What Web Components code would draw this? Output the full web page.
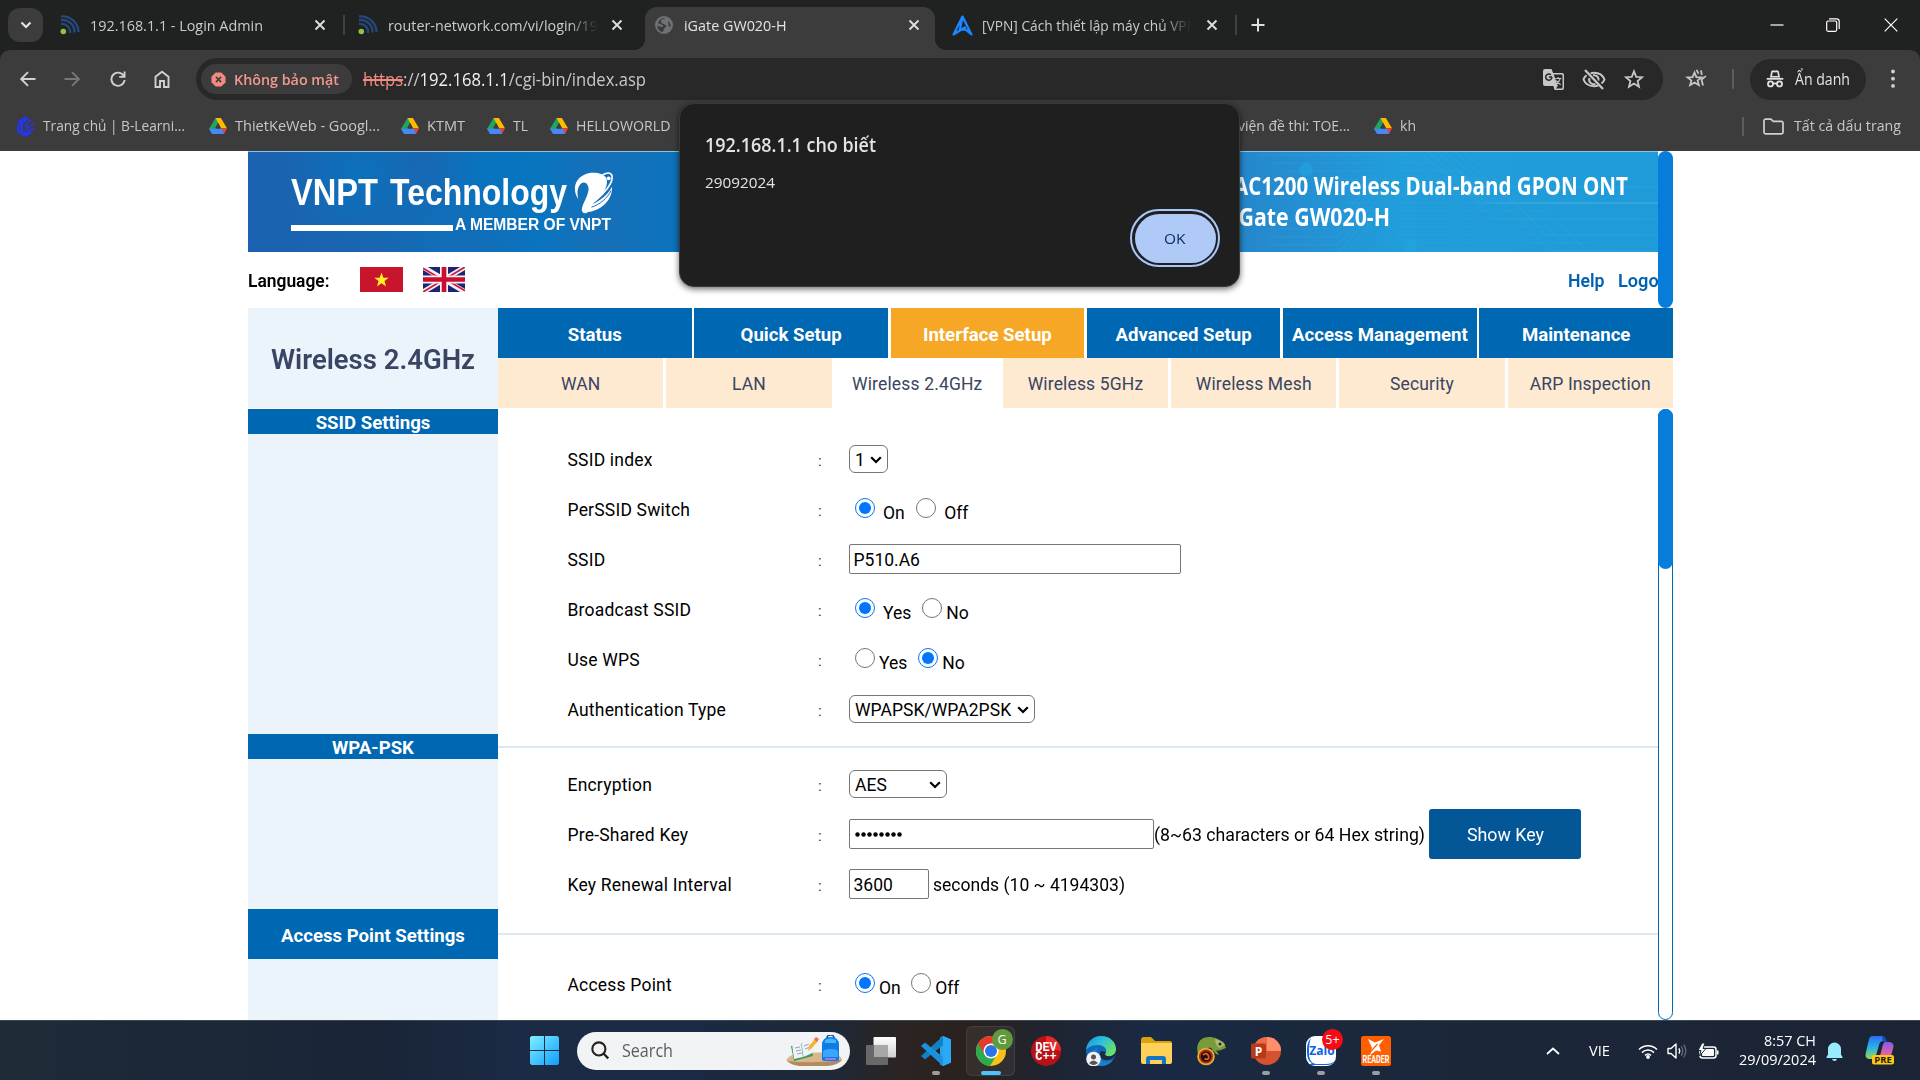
<!DOCTYPE html>
<html lang="vi">
<head>
<meta charset="utf-8">
<title>iGate GW020-H</title>
<style>
html,body{margin:0;padding:0}
body{width:1920px;height:1080px;overflow:hidden;background:#fff;font-family:"Open Sans","Noto Sans",sans-serif}
</style>
</head>
<body>
<desk-top></desk-top>
<script>
const fits = [];
const def = (name, css, html, after) => customElements.define(name, class extends HTMLElement {
  connectedCallback() {
    if (this.shadowRoot) return;
    const r = this.attachShadow({mode: 'open'});
    r.innerHTML = `<style>*{box-sizing:border-box}${css}</style>` + (typeof html === 'function' ? html(this) : html);
    if (after) after(this, r);
  }
});

/* ---------- icons ---------- */
const drive = '<path d="M6.5 1h5.2L5.2 19 0 13z" fill="#1fa463"/><path d="M6.5 1h5.4l6.1 11.5h-6z" fill="#ffba00"/><path d="M18 12.5 15 19l-4-6.5z" fill="#ea4335"/><path d="M0 13h13l2 6H3z" fill="#4688f4"/><path d="m6 12.5 3-6 3 6z" fill="#3c3c3c"/>';
const wifiFav = '<g fill="none" stroke="#26477f" stroke-width="2.3"><path d="M1 9a8 8 0 0 1 9 9"/><path d="M1 5a12 12 0 0 1 13.5 12.500"/><path d="M1 1.500A16 16 0 0 1 18.500 17"/></g><circle cx="3.300" cy="16.500" r="2.800" fill="#8bc83f"/>';
const X = '<path d="m1.500 1.500 9 9m0-9-9 9" stroke="#dedede" stroke-width="1.900" fill="none"/>';
const I = {
  chev: ['0 0 12 8', '<path d="m1.500 1.500 4.500 4.500L10.500 1.500" stroke="#e3e3e3" stroke-width="2.200" fill="none"/>'],
  wifiFav: ['0 0 20 20', wifiFav],
  x: ['0 0 12 12', X],
  globe: ['0 0 18 18', '<circle cx="9" cy="9" r="9" fill="#6e7277"/><path d="M11 2c-2 1-5 1-5 3.500S10 8 11 9.500c.6 1.500-.5 2-1.500 2.500-1.500 1 0 3-2 4C4 15.500 2 12 2.500 9.500L6 11c1 0 2.500 0 2-1.500C7 8 4 8.500 3 7c1-3 3.500-5 8-5zm2 3c2 1 3 4 2.500 6-1 0-2.500-1-2-3z" fill="#3c3c3c"/>'],
  alogo: ['0 0 20 20', '<path d="M10 1.500 18.500 18.500 12.800 13.600 7.500 14zM10 1.500 1.500 18.500 13 11.500" fill="none" stroke="#1a86ff" stroke-width="2.200" stroke-linejoin="round"/>'],
  plus: ['0 0 14 14', '<path d="M7 .5v13M.5 7h13" stroke="#dedede" stroke-width="2"/>'],
  min: ['0 0 14 14', '<path d="M.5 7h13" stroke="#fff" stroke-width="1.200"/>'],
  rest: ['0 0 14 14', '<rect x=".7" y="3" width="10" height="10.300" rx="1.500" fill="none" stroke="#fff" stroke-width="1.200"/><path d="M3 .8h7.500A2.700 2.700 0 0 1 13.200 3.500V11" fill="none" stroke="#fff" stroke-width="1.200"/>'],
  wx: ['0 0 14 14', '<path d="m.7.700 12.600 12.600m0-12.600L.7 13.300" stroke="#fff" stroke-width="1.200"/>'],
  back: ['0 0 16 16', '<path d="M15.500 8H1.800M8 1.200 1.200 8 8 14.800" fill="none" stroke="#d0d0d0" stroke-width="1.900"/>'],
  fwd: ['0 0 16 16', '<path d="M.5 8h13.700M8 1.200 14.800 8 8 14.800" fill="none" stroke="#777" stroke-width="1.900"/>'],
  reload: ['0 0 16 16', '<path d="M13.800 5A6.600 6.600 0 1 0 14.600 9" fill="none" stroke="#d0d0d0" stroke-width="1.900"/><path d="M15.500.5v6.300H9.200V4.900h4.400V.5z" fill="#d0d0d0"/>'],
  home: ['0 0 16 18', '<path d="M1.500 17V6.800L8 1.800l6.500 5V17H10v-6H6v6z" fill="none" stroke="#d0d0d0" stroke-width="1.900"/>'],
  bad: ['0 0 16 16', '<path d="M5 .5h6L15.500 5v6L11 15.500H5L.5 11V5z" fill="#f28b82"/><path d="m5.200 5.200 5.600 5.600m0-5.600-5.600 5.600" stroke="#3c3c3c" stroke-width="1.600"/>'],
  trans: ['0 0 21 21', '<path d="M2 0h6.500l1.600 4H19a2 2 0 0 1 2 2v13a2 2 0 0 1-2 2h-7.500l-1-4H2a2 2 0 0 1-2-2V2A2 2 0 0 1 2 0z" fill="#c7c7c7"/><path d="M10.700 5.500H18.500a1 1 0 0 1 1 1v12a1 1 0 0 1-1 1h-5.700l2-2.500z" fill="#282828"/><path d="M9 8H5.800M8.900 8a3.100 3.100 0 1 1-1-2.200" fill="none" stroke="#282828" stroke-width="1.500"/><path d="M12.300 9.500h6M15.200 8v1.500m2 0c-.5 2.500-2 4-3.800 5m-.1-3c1 2 2.500 3.200 4.400 4.300" fill="none" stroke="#c7c7c7" stroke-width="1.200"/>'],
  eye: ['0 0 24 22', '<path d="M4.500 6.500C3 7.800 2 9.300 1.500 11c1.600 4.200 5.700 7 10.500 7 1.600 0 3-.3 4.500-.9M8.500 4.500c1-.3 2.300-.5 3.500-.5 4.800 0 8.900 2.800 10.500 7-.6 1.600-1.600 3-3 4.200" fill="none" stroke="#c7c7c7" stroke-width="2"/><path d="M7.500 9.500a4.600 4.600 0 0 0 6 6M11 6.600a4.600 4.600 0 0 1 5.500 5.500" fill="none" stroke="#c7c7c7" stroke-width="2"/><path d="m3 1 18 20" stroke="#c7c7c7" stroke-width="2.200"/>'],
  star: ['0 0 20 20', '<path d="m10 2.300 2.200 5.500 5.900.4-4.500 3.800 1.400 5.700-5-3.100-5 3.100 1.400-5.700L1.900 8.200l5.900-.4z" fill="none" stroke="#c7c7c7" stroke-width="1.800"/>'],
  star2: ['0 0 22 22', '<path d="m9.500 4 1.900 4.900 5.200.3-4 3.400 1.300 5.100-4.400-2.800-4.400 2.800 1.300-5.100-4-3.400 5.200-.3z" fill="none" stroke="#c7c7c7" stroke-width="1.800"/><path d="m11.500.8 2 4.300M16 1.500l.8 5M21 7.700l-4.500 4 1.500 6.500" fill="none" stroke="#c7c7c7" stroke-width="1.800"/>'],
  incog: ['0 0 20 20', '<path d="M5.500 7.500 6.700 1.800 8 1.200l2 .6 2-.6 1.300.6 1.200 5.700z" fill="none" stroke="#e3e3e3" stroke-width="1.900"/><path d="M.8 9.800h18.400" stroke="#e3e3e3" stroke-width="2"/><circle cx="5" cy="15.500" r="2.800" fill="none" stroke="#e3e3e3" stroke-width="2"/><circle cx="15" cy="15.500" r="2.800" fill="none" stroke="#e3e3e3" stroke-width="2"/><path d="M7.800 15h4.400" stroke="#e3e3e3" stroke-width="2"/>'],
  kebab: ['0 0 4 20', '<g fill="#d0d0d0"><circle cx="2" cy="2.500" r="1.900"/><circle cx="2" cy="9.700" r="1.900"/><circle cx="2" cy="16.900" r="1.900"/></g>'],
  blearn: ['0 0 19 22', '<path d="M9.500 0 13 2.500 7 8v6l3 3 5-2v4l-6 3-8-5V6z" fill="#2436e8"/><path d="m8.500 11 6.500-7m-6 9 9.500-5m-8.500 7 8-1.500" stroke="#2436e8" stroke-width="1.800" fill="none"/><path d="M2 6c.5 5 2 9 6 12" stroke="#3c3c3c" stroke-width="1" fill="none"/>'],
  drive: ['0 0 18 20', drive],
  folder: ['0 0 21 16', '<path d="M1 13.500V2.500A1.500 1.500 0 0 1 2.500 1H8l2.200 2.200h8.300A1.500 1.500 0 0 1 20 4.700v8.800A1.500 1.500 0 0 1 18.500 15h-16A1.500 1.500 0 0 1 1 13.500z" fill="none" stroke="#d0d0d0" stroke-width="1.700"/>'],
  vn: ['0 0 43 25', '<rect width="43" height="25" fill="#c8152b"/><path d="m21.500 5.500 1.900 5.200 5.300.1-4.200 3.300 1.500 5.300-4.500-3.100-4.500 3.100 1.500-5.300-4.200-3.300 5.300-.1z" fill="#ffee22"/>'],
  uk: ['0 0 42 25', '<rect width="42" height="25" fill="#1d2573"/><path d="m0 0 42 25M42 0 0 25" stroke="#f4eef6" stroke-width="5"/><path d="m0 1.300 19 11.200M42 23.700 23 12.500M42 0 23 11.500M0 25l19-11.500" stroke="#cf1b3a" stroke-width="1.700"/><path d="M21 0v25M0 12.500h42" stroke="#f8eef4" stroke-width="8"/><path d="M21 0v25M0 12.500h42" stroke="#c8102e" stroke-width="4.600"/>'],
  swoosh: ['0 0 42 44', '<path d="M5.500 28C-.5 19 1 8 11 3 19-1 31 1 34 6c3 6-2 17-12 25-4 4-3 8-8 11-3 1-5-1-5-4 1-6 6-12 7-20C16 12 12 9 8 12c-4 4-4 10-2.500 16z" fill="#fff"/><path d="M29 4c5-4 10-4 11 0 1.500 7-8 18-18 26" fill="none" stroke="#fff" stroke-width="1.700"/><path d="M20 33c8-4 16-10 20-18 .5 12-9 24-25 26z" fill="#fff"/><path d="M19 36c9-3 16-9 20-17" fill="none" stroke="#1a6ab5" stroke-width="1"/><circle cx="36.500" cy="6.500" r="2" fill="#fff"/>'],
  win: ['0 0 29 29', '<defs><linearGradient id="a" x1="0" y1="0" x2="1" y2="1"><stop stop-color="#7df1ff"/><stop offset="1" stop-color="#109cff"/></linearGradient></defs><path d="M1.500 0H14v14H0V1.500zM15 0h12.500L29 1.500V14H15zM0 15h14v14H1.500L0 27.500zM15 15h14v12.500L27.500 29H15z" fill="url(#a)"/>'],
  lens: ['0 0 19 20', '<circle cx="8.300" cy="8.300" r="6.900" fill="none" stroke="#222" stroke-width="2.200"/><path d="m13.200 13.200 5 5.200" stroke="#222" stroke-width="2.500"/>'],
  school: ['0 0 56 31', '<path d="M0 25q5-7 17-7l31-1q8 5 8 8-3 4-14 5H13Q4 29 0 25z" fill="#d9b78d"/><path d="M1 26q26 3 55-1-4 5-14 6H13Q5 30 1 26z" fill="#b48b60"/><path d="m5 11 19-5 3 15-19 5z" fill="#3a9c56"/><path d="m6 9 9-1 2 14-9 2zM15.500 8l9-4 2 14-9 4z" fill="#f1f2fa"/><path d="m9 13 5-1m-4 4 5-1m-4 4 5-1m2-7 5-2m-4 5 5-2" stroke="#9aa2ba" stroke-width="1"/><path d="m22 16 1-5 6-7 3 2-6 7z" fill="#f6b32c"/><path d="m28 4 2-2 3 2-2 3z" fill="#ef6b55"/><path d="M36 10Q36 2 44.500 2T53 10v14q0 2-3 2H39q-3 0-3-2z" fill="#1479e8"/><path d="M41 3q0-3 3.500-3T48 3" fill="none" stroke="#0a50b0" stroke-width="1.500"/><path d="M37 17q0-3 7.500-3t7.500 3v5H37z" fill="#38a7fa"/><path d="M39 5q5-3 11 0v3H39z" fill="#42b8fd"/><path d="M39 24h11" stroke="#c77df1" stroke-width="1.500"/>'],
  task: ['0 0 30 28', '<defs><linearGradient id="a" x2="0" y2="1"><stop stop-color="#fff"/><stop offset="1" stop-color="#cfcfcf"/></linearGradient></defs><rect x="7.500" width="22.500" height="20.500" rx="1" fill="url(#a)"/><rect y="8" width="22" height="20" rx="1" fill="#686868"/><path d="M8 8h14v12H8z" fill="#a7a7a7"/>'],
  code: ['0 0 30 30', '<path d="m22 0 8 3.500v23L22 30l-3-1.500V1.500z" fill="#26a3f0"/><path d="M22 0v9L4 23.500 0 20z" fill="#1180c4"/><path d="M22 30v-9L4 6.500 0 10z" fill="#1b91dc"/><path d="M22 0v30l8-3.500v-23z" fill="#2aa9f5"/>'],
  chrome: ['0 0 30 30', '<circle cx="15" cy="15" r="15" fill="#fbc116"/><path d="M15 15 2 7.500A15 15 0 0 0 14 30l7-11.500z" fill="#2da94f"/><path d="M15 7.500h13A15 15 0 0 0 2 7.500l6.500 11z" fill="#e33b2e"/><circle cx="15" cy="15" r="7.500" fill="#fff"/><circle cx="15" cy="15" r="6" fill="#2a74e8"/>'],
  dev: ['0 0 30 30', '<circle cx="15" cy="15" r="15" fill="#b90f17"/><path d="M15 0a15 15 0 0 1 15 15L15 12z" fill="#e32b2b"/><g fill="#fff" font-family="Liberation Mono" font-weight="700" text-anchor="middle"><text x="15" y="14.500" font-size="12">DEV</text><text x="15" y="24" font-size="12">C++</text></g>'],
  edge: ['0 0 30 30', '<defs><linearGradient id="a" x2="1" y2=".6"><stop stop-color="#1b90dc"/><stop offset=".5" stop-color="#2bc0da"/><stop offset="1" stop-color="#6be06a"/></linearGradient></defs><circle cx="15" cy="15" r="15" fill="#1167b8"/><path d="M0 14C1 5 8 0 15 0c9 0 15 6 15 13 0 6-5 8-9 7-3-1-2-2-1-4 1-4-3-7-8-7C6 9 1 12 0 14z" fill="url(#a)"/><path d="M12 12c-5 8 2 17 15 12-3 4-7 6-12 6C6 30 2 22 6 15c2-2 4-3 6-3z" fill="#1a7fcd"/><path d="M20 16c-1 2-2 3 1 4 4 1 8-1 9-5 1 5-4 9-9 9-7 0-8-6-6-9z" fill="#1b2a3e"/><circle cx="7.500" cy="23" r="7.300" fill="#f3f3f3"/><circle cx="7.500" cy="21" r="2.500" fill="#555"/><path d="M3 27q4.500-5 9 0-4.500 4-9 0z" fill="#555"/>'],
  fold: ['0 0 31 27', '<path d="M0 3q0-3 3-3h7l4 4h15q2 0 2 2v8H0z" fill="#dba10f"/><path d="M0 6h31v19q0 2-2 2H2q-2 0-2-2z" fill="#ffd158"/><path d="M5 22q0-3 3-3h14q3 0 3 3v5h-4v-4H9v4H5z" fill="#1275c6"/>'],
  gecko: ['0 0 30 30', '<path d="M3 20C-2 9 4 1 13 1c6 0 9 2 15 6l2 5-5 2q-3 1-5 0l3 5-3-1-5-6c-6-1-9 3-8 9z" fill="#7a9a3c"/><path d="M19 3q7 1 10 6l-6 3q-4-4-4-9z" fill="#a9bd70"/><circle cx="10" cy="20.500" r="8.800" fill="#dfb42c"/><circle cx="10" cy="20.500" r="7" fill="#c02512"/><circle cx="10" cy="20.500" r="5.200" fill="#171311"/><path d="M7 19q4-3 5.500 1t-4 3" fill="none" stroke="#eb5c1a" stroke-width="1.800"/><circle cx="24" cy="8" r="1.500" fill="#222"/>'],
  ppt: ['0 0 30 28', '<circle cx="16" cy="14" r="14" fill="#d35230"/><path d="M16 0a14 14 0 0 1 14 14H16z" fill="#ff8f6b"/><path d="M16 0v14H2A14 14 0 0 1 16 0z" fill="#ed6c47"/><rect x="0" y="6.500" width="15" height="15" rx="1.500" fill="#b93a1a"/><text x="7.500" y="18.500" font-size="12" font-weight="700" font-family="Open Sans" text-anchor="middle" fill="#fff">P</text>'],
  zalo: ['0 0 30 30', '<rect width="30" height="30" rx="9" fill="#fff"/><path d="M5 2C2 5 1 9 1 15s1 10 5 12l-3 2h18q9 0 9-9v1q0 7-10 7H10Q2 27 3 15 3 6 5 2z" fill="#0b68e8"/><text x="16" y="19" font-size="12" font-weight="700" font-family="Open Sans" text-anchor="middle" fill="#0b62e4">Zalo</text>'],
  foxit: ['0 0 30 30', '<rect width="30" height="30" rx="2.500" fill="#ff5f00"/><path d="M7 3 14 6.500 23 3l-5 6 2 6.500-5-1-6 4.500 2-7z" fill="#fff"/><path d="m8.500 17 8-9" stroke="#ff5f00" stroke-width="1.200"/><text x="15" y="27" font-size="10" font-weight="700" font-family="Roboto" text-anchor="middle" textLength="27" lengthAdjust="spacingAndGlyphs" fill="#fff">READER</text>'],
  up: ['0 0 14 8', '<path d="m1 7 6-5.500L13 7" fill="none" stroke="#fff" stroke-width="1.700"/>'],
  wifi: ['0 0 20 16', '<g fill="none" stroke="#fff" stroke-width="1.500"><path d="M1 6.500a12.500 12.500 0 0 1 18 0"/><path d="M4 9.600a8.500 8.500 0 0 1 12 0"/><path d="M7 12.400a4.500 4.500 0 0 1 6 0"/></g><circle cx="10" cy="14" r="1.900" fill="#fff"/>'],
  snd: ['0 0 20 16', '<path d="M1 5.500h3l5-4.500v14l-5-4.500H1z" fill="none" stroke="#fff" stroke-width="1.400" stroke-linejoin="round"/><path d="M12 5.300q1.500 2.700 0 5.400" fill="none" stroke="#fff" stroke-width="1.400"/><path d="M14.200 3.300q3 4.700 0 9.400M16.800 1.600q4 6.400 0 12.800" fill="none" stroke="#66707c" stroke-width="1.200"/>'],
  bat: ['0 0 21 16', '<rect x="2" y="4" width="16" height="11" rx="2.500" fill="none" stroke="#fff" stroke-width="1.500"/><rect x="4" y="6" width="12" height="7" rx="1" fill="#fff"/><path d="M19 7.500h1.500v4H19z" fill="#fff"/><path d="M4 0 0 7.500h3L1.500 13 8 5.500H5L7 0z" fill="#fff" stroke="#1c2636" stroke-width="1"/>'],
  bell: ['0 0 17 20', '<path d="M2 13.500V8a6.500 6.500 0 0 1 13 0v5.500l1.500 2.500v1H.5v-1zM6 18h5q-.5 2-2.500 2T6 18z" fill="#99ebff"/>'],
  copilot: ['0 0 30 29', '<defs><linearGradient id="a" x2="0" y2="1"><stop stop-color="#2b6df3"/><stop offset=".5" stop-color="#27b4e8"/><stop offset="1" stop-color="#9ed64a"/></linearGradient><linearGradient id="b" x2="0" y2="1"><stop stop-color="#8958e8"/><stop offset=".6" stop-color="#e865a0"/><stop offset="1" stop-color="#f59b51"/></linearGradient></defs><path d="M7 0h10q3 0 4 4l-3 1q-3 0-4 4l-4 14H5q-6 0-4-7L4 3q1-3 3-3z" fill="url(#a)"/><path d="M20 6h4q6 0 4 7l-3 10q-1 5-6 5H9q4 0 5-4l3-12q1-5 3-6z" fill="url(#b)"/><path d="M17 0q4 0 5 6h-4z" fill="#1747b8"/><rect x="7" y="19" width="22" height="9.500" rx="2" fill="#ffc70f"/><text x="18" y="27" font-size="9.500" font-weight="700" font-family="Open Sans" text-anchor="middle" fill="#202020">PRE</text>']
};
def('ui-icon', ':host{display:block;flex:none}svg{display:block;width:100%;height:100%}',
  e => { const i = I[e.getAttribute('n')]; return `<svg viewBox="${i[0]}" preserveAspectRatio="none">${i[1]}</svg>`; },
  e => { e.style.width = e.getAttribute('w') + 'px'; e.style.height = e.getAttribute('h') + 'px'; if (e.hasAttribute('l')) e.style.marginLeft = e.getAttribute('l') + 'px'; });

/* text squeezed or stretched to a given width */
def('fit-text', ':host{display:block;flex:none;white-space:nowrap}span{display:inline-block;transform-origin:0 50%}', '<span><slot></slot></span>',
  (e, r) => { e.style.width = e.getAttribute('w') + 'px'; if (e.hasAttribute('l')) e.style.marginLeft = e.getAttribute('l') + 'px'; fits.push([e, r.querySelector('span')]); });

/* ---------- browser ---------- */
def('tab-strip', `:host{display:flex;height:50px;background:#202221;align-items:center;font-size:15px;color:#c9cccb;position:relative}
.s{width:35px;height:34px;border-radius:12px;background:#3c3c3c;margin-left:8px;display:flex;align-items:center;justify-content:center}
.sep{width:2px;height:20px;background:#3f4241}
.act{width:290px;height:43px;margin:7px 0 0;background:#3c3c3c;border-radius:12px 12px 0 0;display:flex;align-items:center;position:relative;padding-bottom:7px;color:#e3e3e3}
.act:before,.act:after{content:"";position:absolute;bottom:0;width:12px;height:12px}
.act:before{left:-12px;background:radial-gradient(circle at 0 0,transparent 12px,#3c3c3c 12.500px)}
.act:after{right:-12px;background:radial-gradient(circle at 100% 0,transparent 12px,#3c3c3c 12.500px)}
.f{overflow:hidden;-webkit-mask-image:linear-gradient(90deg,#000 86%,transparent)}`,
`<div class="s"><ui-icon n="chev" w="12" h="8"></ui-icon></div>
<ui-icon n="wifiFav" w="20" h="20" l="16.500"></ui-icon><fit-text w="173" l="10.500">192.168.1.1 - Login Admin</fit-text><ui-icon n="x" w="12" h="12" l="51"></ui-icon>
<div class="sep" style="margin-left:17px"></div>
<ui-icon n="wifiFav" w="20" h="20" l="13"></ui-icon><div class="f" style="width:210px;margin-left:9.500px"><fit-text w="210">router-network.com/vi/login/19</fit-text></div><ui-icon n="x" w="12" h="12" l="13.500"></ui-icon>
<div class="act" style="margin-left:21.500px"><ui-icon n="globe" w="18" h="18" l="10.500"></ui-icon><fit-text w="102.500" l="10.500">iGate GW020-H</fit-text><ui-icon n="x" w="12" h="12" l="122"></ui-icon></div>
<ui-icon n="alogo" w="21" h="21" l="17.500"></ui-icon><div class="f" style="width:209px;margin-left:9px"><fit-text w="215">[VPN] Cách thiết lập máy chủ VPN</fit-text></div><ui-icon n="x" w="12" h="12" l="14.500"></ui-icon>
<div class="sep" style="margin-left:17px"></div><ui-icon n="plus" w="14" h="14" l="14"></ui-icon>
<ui-icon n="min" w="14" h="14" l="505"></ui-icon><ui-icon n="rest" w="14" h="14" l="42"></ui-icon><ui-icon n="wx" w="14" h="14" l="44"></ui-icon>`);

def('tool-bar', `:host{display:block;background:#202221}
.b{display:flex;height:58px;background:#3c3c3c;border-radius:10px 10px 0 0;align-items:center}
.o{margin-left:26px;width:1467px;height:42px;border-radius:21px;background:#282828;display:flex;align-items:center}
.chip{margin-left:5px;width:151px;height:30px;border-radius:15px;background:#3c3c3c;display:flex;align-items:center;color:#f2998f;font-size:15px;font-weight:600}
.u{font-size:17.500px;color:#c7c7c7}.u s{color:#f28b82;text-decoration-thickness:2px}.u b{font-weight:400;color:#f0f0f0}
.sep{width:2px;height:20px;background:#5e5e5e;border-radius:1px}
.p{margin-left:16px;width:116px;height:41px;border-radius:21px;background:#282828;display:flex;align-items:center;color:#e3e3e3;font-size:15.500px;padding-bottom:1px}`,
`<div class="b"><ui-icon n="back" w="16" h="16" l="20"></ui-icon><ui-icon n="fwd" w="16" h="16" l="28"></ui-icon><ui-icon n="reload" w="16" h="16" l="29.500"></ui-icon><ui-icon n="home" w="16" h="18" l="28.500"></ui-icon>
<div class="o"><div class="chip"><ui-icon n="bad" w="15" h="15" l="10"></ui-icon><fit-text w="105" l="8">Không bảo mật</fit-text></div>
<fit-text class="u" w="283" l="11"><s>https</s>://<b>192.168.1.1</b>/cgi-bin/index.asp</fit-text>
<ui-icon n="trans" w="21" h="21" l="897"></ui-icon><ui-icon n="eye" w="24" h="21" l="17.500"></ui-icon><ui-icon n="star" w="20" h="20" l="18"></ui-icon></div>
<ui-icon n="star2" w="22" h="20" l="22"></ui-icon><div class="sep" style="margin-left:25px"></div>
<div class="p"><ui-icon n="incog" w="18" h="18" l="15.500"></ui-icon><fit-text w="55" l="11">Ẩn danh</fit-text></div><ui-icon n="kebab" w="4" h="20" l="25"></ui-icon></div>`);

def('bookmark-bar', `:host{display:flex;height:43px;background:#3c3c3c;align-items:center;padding-bottom:7px;font-size:15px;color:#c7c7c7}
fit-text{margin-bottom:2px}.sep{width:2px;height:19px;background:#5e5e5e}`,
`<ui-icon n="blearn" w="19" h="21" l="15.500"></ui-icon><fit-text w="142" l="8.500">Trang chủ | B-Learni...</fit-text>
<ui-icon n="drive" w="18" h="18" l="23.500"></ui-icon><fit-text w="145" l="8">ThietKeWeb - Googl...</fit-text>
<ui-icon n="drive" w="18" h="18" l="21"></ui-icon><fit-text w="38" l="8.500">KTMT</fit-text>
<ui-icon n="drive" w="18" h="18" l="21.500"></ui-icon><fit-text w="15" l="8.500">TL</fit-text>
<ui-icon n="drive" w="18" h="18" l="21.500"></ui-icon><fit-text w="94.500" l="8.500">HELLOWORLD</fit-text>
<fit-text w="112" l="567.500">viện đề thi: TOE...</fit-text><ui-icon n="drive" w="18" h="18" l="23.500"></ui-icon><fit-text w="16" l="8.500">kh</fit-text>
<div class="sep" style="margin-left:325.500px"></div><ui-icon n="folder" w="21" h="17" l="19.500"></ui-icon><fit-text w="107" l="9.500">Tất cả dấu trang</fit-text>`);

/* ---------- alert dialog ---------- */
def('alert-box', `:host{position:absolute;left:679px;top:103px;width:561px;height:184px;box-sizing:border-box;background:#1f1f1f;border:1px solid #3a3a3a;border-radius:15px;box-shadow:0 2px 6px rgba(0,0,0,.6);display:flex;flex-direction:column;padding:0 19px 19px 25px;color:#e3e3e3}
h1{font-size:19.500px;font-weight:600;margin:27px 0 0;line-height:28px}
p{margin:13px 0 0;font-size:15px;line-height:20px}
.r{align-self:flex-end;margin-top:17px;width:90px;height:58px;flex:none;border:2px solid #a8c7fa;border-radius:29px;padding:2.500px}
.k{height:100%;border-radius:27px;background:#b0caf8;color:#0b2d6b;display:flex;align-items:center;justify-content:center;font-size:15px}`,
`<h1><fit-text w="171">192.168.1.1 cho biết</fit-text></h1><p><fit-text w="70">29092024</fit-text></p><div class="r"><div class="k"><fit-text w="21.500">OK</fit-text></div></div>`);

/* ---------- router page ---------- */
const lines = (() => { let s = ''; for (let i = 0; i < 13; i++) { const y = 4 + i * 8; s += `<path d="M${1010 + i * 14} ${y}h${150 + (i % 4) * 12}l30 ${i % 2 ? 24 : 32}h${230}"/>`; } for (let i = 0; i < 6; i++) s += `<path d="M${1170 + i * 9} 0l60 52h220M1020 ${70 + i * 8}h70l38-44"/>`; return s; })();
def('site-banner', `:host{display:block;width:1410px;height:101px;position:relative;overflow:hidden;background:radial-gradient(circle at 110px 25px,rgba(8,116,190,.8),transparent 75px),radial-gradient(circle at 190px 80px,rgba(8,116,190,.6),transparent 70px),radial-gradient(circle at 245px 20px,rgba(0,120,195,.7),transparent 75px),linear-gradient(90deg,#1a62b0 0,#1b66b2 190px,#0a74be 290px,#1670b8 350px,#0b74be 440px,#1b86cc 800px,#2588cd 1000px,#219ddb 1150px,#1f9bda 1410px)}
.g{display:flex;height:100%;justify-content:space-between;color:#fff;border-top:1px solid #8cc4e8;position:relative}
svg.c{position:absolute;inset:0}
.l{margin:20px 0 0 43px;width:330px}
.t{display:flex;font:700 36px/42px "Liberation Sans",sans-serif}
.m{display:flex;align-items:center;font:700 16px/16px "Liberation Sans",sans-serif;margin-top:2px}
.m i{width:162px;height:6.500px;background:#fff;margin-top:6px}
.r{font:700 24.500px/31px "Open Sans","Noto Sans",sans-serif;width:426px;padding-top:18px}`,
`<svg class="c" width="1410" height="101"><g fill="none" stroke="#45b9e8" stroke-opacity=".14" stroke-width="1.500">${lines}</g><g fill="#22a8e4" fill-opacity=".5"><circle cx="1058" cy="19" r="7"/><circle cx="1162" cy="95" r="7"/></g></svg>
<div class="g"><div class="l"><div class="t"><fit-text w="87">VNPT</fit-text><fit-text w="177" l="12">Technology</fit-text><ui-icon n="swoosh" w="41" h="43" l="6"></ui-icon></div><div class="m"><i></i><fit-text w="156" l="2">A MEMBER OF VNPT</fit-text></div></div>
<div class="r"><fit-text w="394" l="2">AC1200 Wireless Dual-band GPON ONT</fit-text><fit-text w="158" l="0">iGate GW020-H</fit-text></div></div>`);

def('page-top', `:host{display:flex;height:157px}
.c{width:1410px;overflow:hidden}.th{width:15px;height:157px;border-radius:7.500px;background:#067ddb}
.l{height:56px;display:flex;align-items:center;font-weight:600;padding-top:1px}
.l a{color:#0062b0}`,
`<div class="c"><site-banner></site-banner><div class="l"><fit-text w="81.500">Language:</fit-text><ui-icon n="vn" w="43" h="25" l="30.500" style="margin-bottom:3px"></ui-icon><ui-icon n="uk" w="42" h="25" l="20" style="margin-bottom:3px"></ui-icon>
<a style="margin-left:1103px"><fit-text w="36.500">Help</fit-text></a><a style="margin-left:13px"><fit-text w="57">Logout</fit-text></a></div></div><div class="th"></div>`);

def('nav-cell', `:host{flex:1 1 0;min-width:0;height:50px;display:flex;align-items:center;justify-content:center;white-space:nowrap;padding-top:2px;box-sizing:border-box;letter-spacing:.15px}
:host([k=m]){background:#0067b3;color:#fff;font-weight:700;font-size:18.600px;padding-top:4px;letter-spacing:0}:host([k=m][on]){background:#f6a725}
:host([k=s]){background:#fdead1;color:#3a4463}:host([k=s][on]){background:#fff}`, '<slot></slot>');
def('page-nav', `:host{display:flex;height:101px}
h2{margin:0;width:250px;height:100px;background:#ebf3fb;display:flex;align-items:center;justify-content:center;font-size:27.500px;font-weight:600;color:#3a4463;padding-top:2px}
.r{width:1175px}.m{display:flex;gap:2.600px}.s{display:flex;gap:2.800px}`,
`<h2><fit-text w="204">Wireless 2.4GHz</fit-text></h2><div class="r"><div class="m">${['Status','Quick Setup','Interface Setup','Advanced Setup','Access Management','Maintenance'].map((t, i) => `<nav-cell k="m"${i == 2 ? ' on' : ''}>${t}</nav-cell>`).join('')}</div>
<div class="s">${['WAN','LAN','Wireless 2.4GHz','Wireless 5GHz','Wireless Mesh','Security','ARP Inspection'].map((t, i) => `<nav-cell k="s"${i == 2 ? ' on' : ''}>${t}</nav-cell>`).join('')}</div></div>`);

def('form-row', `:host{display:flex;height:50px;align-items:center;padding-left:69.500px;white-space:nowrap}
label{width:250.500px;padding-top:1px;letter-spacing:.2px}i{font-style:normal;width:31px;font-size:15px;padding-top:3px;color:#333}`,
  e => `<label>${e.getAttribute('label')}</label><i>:</i><slot></slot>`);
def('radio-dot', `:host{display:block;flex:none;width:20px;height:20px;border:1.300px solid #767676;border-radius:50%;margin-bottom:2px;padding:3px;box-sizing:border-box}
:host([on]){border-color:#0075ff}:host([on]) b{display:block;width:12px;height:12px;background:#0075ff;border-radius:50%}`, '<b></b>', e => { e.style.marginLeft = e.getAttribute('l') + 'px'; });
def('radio-text', ':host{display:block;padding-top:8px}', '<slot></slot>', e => { e.style.marginLeft = e.getAttribute('l') + 'px'; });
def('select-box', `:host{display:flex;align-items:center;justify-content:space-between;height:28px;border:1px solid #767676;border-radius:6px;padding:1px 5px 0 5px;box-sizing:border-box;letter-spacing:.05px}svg{display:block}`,
  '<slot></slot><svg width="12" height="8" viewBox="0 0 12 8"><path d="m1.200 1.200 4.800 4.800 4.800-4.800" fill="none" stroke="#000" stroke-width="2.200"/></svg>', e => { e.style.width = e.getAttribute('w') + 'px'; });
def('text-field', `:host{display:flex;align-items:center;height:30px;border:1px solid #767676;border-radius:2px;padding:1px 4px 0 3.500px;box-sizing:border-box}`, '<slot></slot>', e => { e.style.width = e.getAttribute('w') + 'px'; });

def('side-menu', `:host{display:block;width:250px;height:611px;background:#ebf3fb;text-align:center;color:#fff;font-weight:700;font-size:18.600px}
div{background:#0067b3;height:25px;line-height:28px}`,
`<div>SSID Settings</div><div style="margin-top:300px">WPA-PSK</div><div style="margin-top:150px;height:50px;line-height:54px">Access Point Settings</div>`);

def('wifi-form', `:host{display:block;width:1160px;height:611px;padding-top:25px;overflow:hidden;box-sizing:border-box}
hr{border:0;height:2px;background:#dce9f5;margin:12px 0 11px}
.n{padding-top:1px}
.btn{width:152px;height:50px;background:#035796;border-radius:3px;color:#fff;display:flex;align-items:center;justify-content:center;margin-left:5px;padding-top:2px}
.dots{display:flex;gap:1px;margin-left:1px}.dots b{width:5px;height:5px;border-radius:50%;background:#000;transform:scale(.9)}`,
`<form-row label="SSID index"><select-box w="39">1</select-box></form-row>
<form-row label="PerSSID Switch"><radio-dot on l="6"></radio-dot><radio-text l="8">On</radio-text><radio-dot l="11.500"></radio-dot><radio-text l="8">Off</radio-text></form-row>
<form-row label="SSID"><text-field w="332">P510.A6</text-field></form-row>
<form-row label="Broadcast SSID"><radio-dot on l="6"></radio-dot><radio-text l="8">Yes</radio-text><radio-dot l="11"></radio-dot><radio-text l="4">No</radio-text></form-row>
<form-row label="Use WPS"><radio-dot l="6"></radio-dot><radio-text l="4">Yes</radio-text><radio-dot on l="11"></radio-dot><radio-text l="4">No</radio-text></form-row>
<form-row label="Authentication Type"><select-box w="186">WPAPSK/WPA2PSK</select-box></form-row>
<hr>
<form-row label="Encryption"><select-box w="98">AES</select-box></form-row>
<form-row label="Pre-Shared Key"><text-field w="305"><span class="dots">${'<b></b>'.repeat(8)}</span></text-field><fit-text class="n" w="271">(8~63 characters or 64 Hex string)</fit-text><div class="btn" style="margin-left:4px"><fit-text w="77">Show Key</fit-text></div></form-row>
<form-row label="Key Renewal Interval"><text-field w="80">3600</text-field><fit-text class="n" w="192" l="4">seconds (10 ~ 4194303)</fit-text></form-row>
<hr style="margin:24px 0 24px">
<form-row label="Access Point"><radio-dot on l="6"></radio-dot><radio-text l="4">On</radio-text><radio-dot l="10.500"></radio-dot><radio-text l="4">Off</radio-text></form-row>`);

def('scroll-track', `:host{display:block;width:15px;height:611px;border:1px solid #0067b3;border-radius:7.500px;box-sizing:border-box}
div{width:15px;height:160px;margin:-1px 0 0 -1px;border-radius:7.500px;background:#067ddb}`, '<div></div>');

def('router-page', `:host{display:block;height:869px;background:#fff;font:17.500px Roboto,sans-serif;color:#000;overflow:hidden}
.w{width:1425px;margin-left:248px}.b{display:flex}`,
`<div class="w"><page-top></page-top><page-nav></page-nav><div class="b"><side-menu></side-menu><wifi-form></wifi-form><scroll-track></scroll-track></div></div>`);

/* ---------- taskbar ---------- */
def('app-icon', `:host{display:flex;flex-direction:column;align-items:center;justify-content:center;flex:none;position:relative;height:60px}
i{position:absolute;bottom:6px;left:50%;width:8px;height:4px;margin-left:-4px;border-radius:2px;background:#9a9da1}
:host([run=act]) i{width:20px;margin-left:-10px;background:#4cc2ff}
em{position:absolute;right:-7px;top:8px;width:21px;height:21px;border-radius:50%;font:12.500px/21px "Open Sans",sans-serif;text-align:center;color:#fff}`,
  e => `<ui-icon n="${e.getAttribute('n')}" w="${e.getAttribute('w') || 30}" h="${e.getAttribute('h') || 30}"></ui-icon>${e.hasAttribute('run') ? '<i></i>' : ''}${e.hasAttribute('badge') ? `<em style="background:${e.getAttribute('bc')}">${e.getAttribute('badge')}</em>` : ''}`,
  e => { e.style.marginLeft = e.getAttribute('l') + 'px'; });
def('task-bar', `:host{display:flex;height:60px;align-items:center;box-sizing:border-box;border-top:1px solid #3c4a50;background:linear-gradient(90deg,#202b38 0,#192437 380px,#1b2b45 520px,#1a2a42 700px,#1f2837 830px,#2b2422 900px,#2b211e 970px,#1d2533 1060px,#1a2a44 1150px,#1b273a 1400px,#1b2434 1920px)}
.s{width:273px;height:38px;border-radius:19px;background:#f2f3f5;margin-left:18px;display:flex;align-items:center;color:#5c5c5c;font-size:17.500px}
.s fit-text{margin-bottom:1px}
.c{width:49px;height:50px;margin-left:15px;border-radius:6px;background:rgba(255,255,255,.06);border:1px solid rgba(255,255,255,.08);display:flex;align-items:center;justify-content:center}
.t{color:#fff;font-size:15px;line-height:19px;margin-bottom:1px}.k{display:flex;flex-direction:column;align-items:flex-end;margin-left:20px}`,
`<ui-icon n="win" w="29" h="29" l="530"></ui-icon>
<div class="s"><ui-icon n="lens" w="18" h="19" l="14"></ui-icon><fit-text w="51" l="13">Search</fit-text><ui-icon n="school" w="56" h="31" l="113"></ui-icon></div>
<app-icon n="task" h="28" l="16"></app-icon><app-icon n="code" run l="25"></app-icon>
<div class="c"><app-icon n="chrome" run="act" badge="G" bc="#5f9a3c" l="0"></app-icon></div>
<app-icon n="dev" l="15.500"></app-icon><app-icon n="edge" l="25.500"></app-icon><app-icon n="fold" w="31" h="27" l="25"></app-icon><app-icon n="gecko" l="24"></app-icon><app-icon n="ppt" h="28" run l="25"></app-icon><app-icon n="zalo" run badge="5+" bc="#f80a12" l="25"></app-icon><app-icon n="foxit" run l="25"></app-icon>
<ui-icon n="up" w="14" h="8" l="155"></ui-icon><fit-text class="t" w="21" l="29">VIE</fit-text>
<ui-icon n="wifi" w="20" h="16" l="28"></ui-icon><ui-icon n="snd" w="20" h="16" l="9"></ui-icon><ui-icon n="bat" w="21" h="16" l="11"></ui-icon>
<div class="k t"><fit-text w="52">8:57 CH</fit-text><fit-text w="77">29/09/2024</fit-text></div><ui-icon n="bell" w="17" h="20" l="10"></ui-icon><ui-icon n="copilot" w="30" h="29" l="22"></ui-icon>`);

def('desk-top', ':host{display:flex;flex-direction:column;width:1920px;height:1080px;position:relative;overflow:hidden}',
  '<tab-strip></tab-strip><tool-bar></tool-bar><bookmark-bar></bookmark-bar><router-page></router-page><task-bar></task-bar><alert-box></alert-box>');

for (const [e, s] of fits) { const n = s.offsetWidth; if (n) s.style.transform = `scaleX(${parseFloat(e.getAttribute('w')) / s.getBoundingClientRect().width})`; }
</script>
</body>
</html>
